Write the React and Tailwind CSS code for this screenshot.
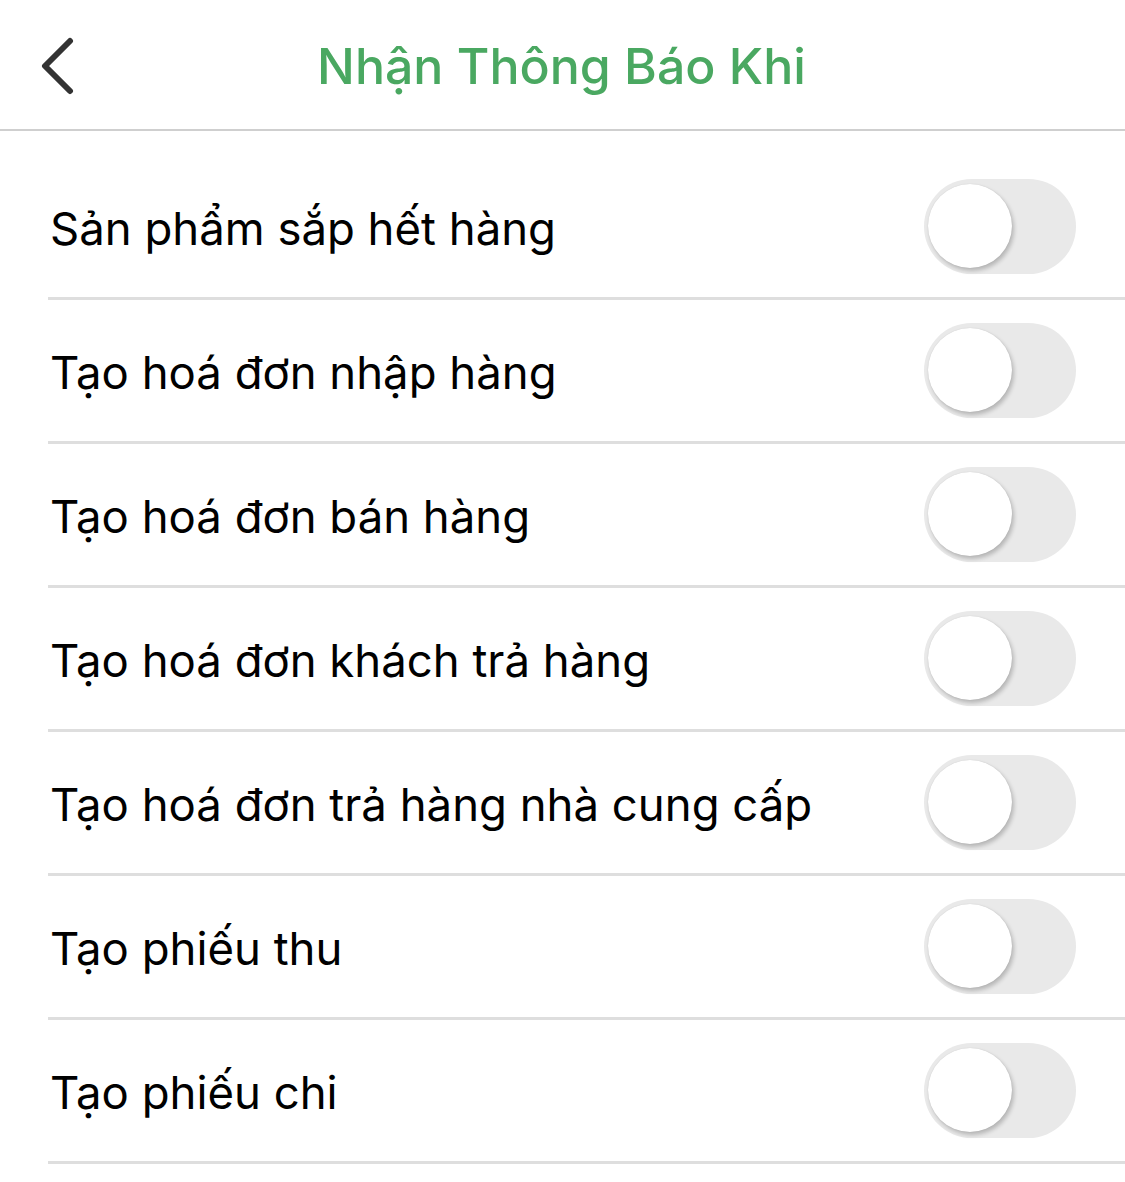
import React from "react";

const items = [
  "Sản phẩm sắp hết hàng",
  "Tạo hoá đơn nhập hàng",
  "Tạo hoá đơn bán hàng",
  "Tạo hoá đơn khách trả hàng",
  "Tạo hoá đơn trả hàng nhà cung cấp",
  "Tạo phiếu thu",
  "Tạo phiếu chi",
];

function Toggle() {
  return (
    <div className="relative w-[152px] h-[95px] rounded-full bg-[#e9e9e9] shrink-0">
      <div className="absolute left-[4px] top-[5px] w-[84px] h-[84px] rounded-full bg-white shadow-[2px_3px_4px_rgba(0,0,0,0.22),0_0_1px_rgba(0,0,0,0.15)]" />
    </div>
  );
}

export default function App() {
  return (
    <div className="w-[1125px] h-[1182px] bg-white overflow-hidden" style={{ fontFamily: "Inter, 'Noto Sans', sans-serif" }}>
      <div className="relative h-[131px] border-b-2 border-[#cfcfcf] flex items-center justify-center">
        <svg className="absolute left-[38px] top-[37px]" width="38" height="58" viewBox="0 0 38 58" fill="none">
          <path d="M32 4 L7 29 L32 54" stroke="#333333" strokeWidth="6" strokeLinecap="round" strokeLinejoin="round" />
        </svg>
        <div className="text-[50px] font-medium text-[#4aa861] mt-[3px] ml-[-2px]">Nhận Thông Báo Khi</div>
      </div>
      <div className="pt-[25px]">
        {items.map((t) => (
          <div key={t} className="ml-[48px] h-[144px] flex items-center justify-between border-b-[3px] border-[#dedede] pr-[49px]">
            <div className="text-[45.5px] text-black pl-[2px] mt-[5px]">{t}</div>
            <Toggle />
          </div>
        ))}
      </div>
    </div>
  );
}
